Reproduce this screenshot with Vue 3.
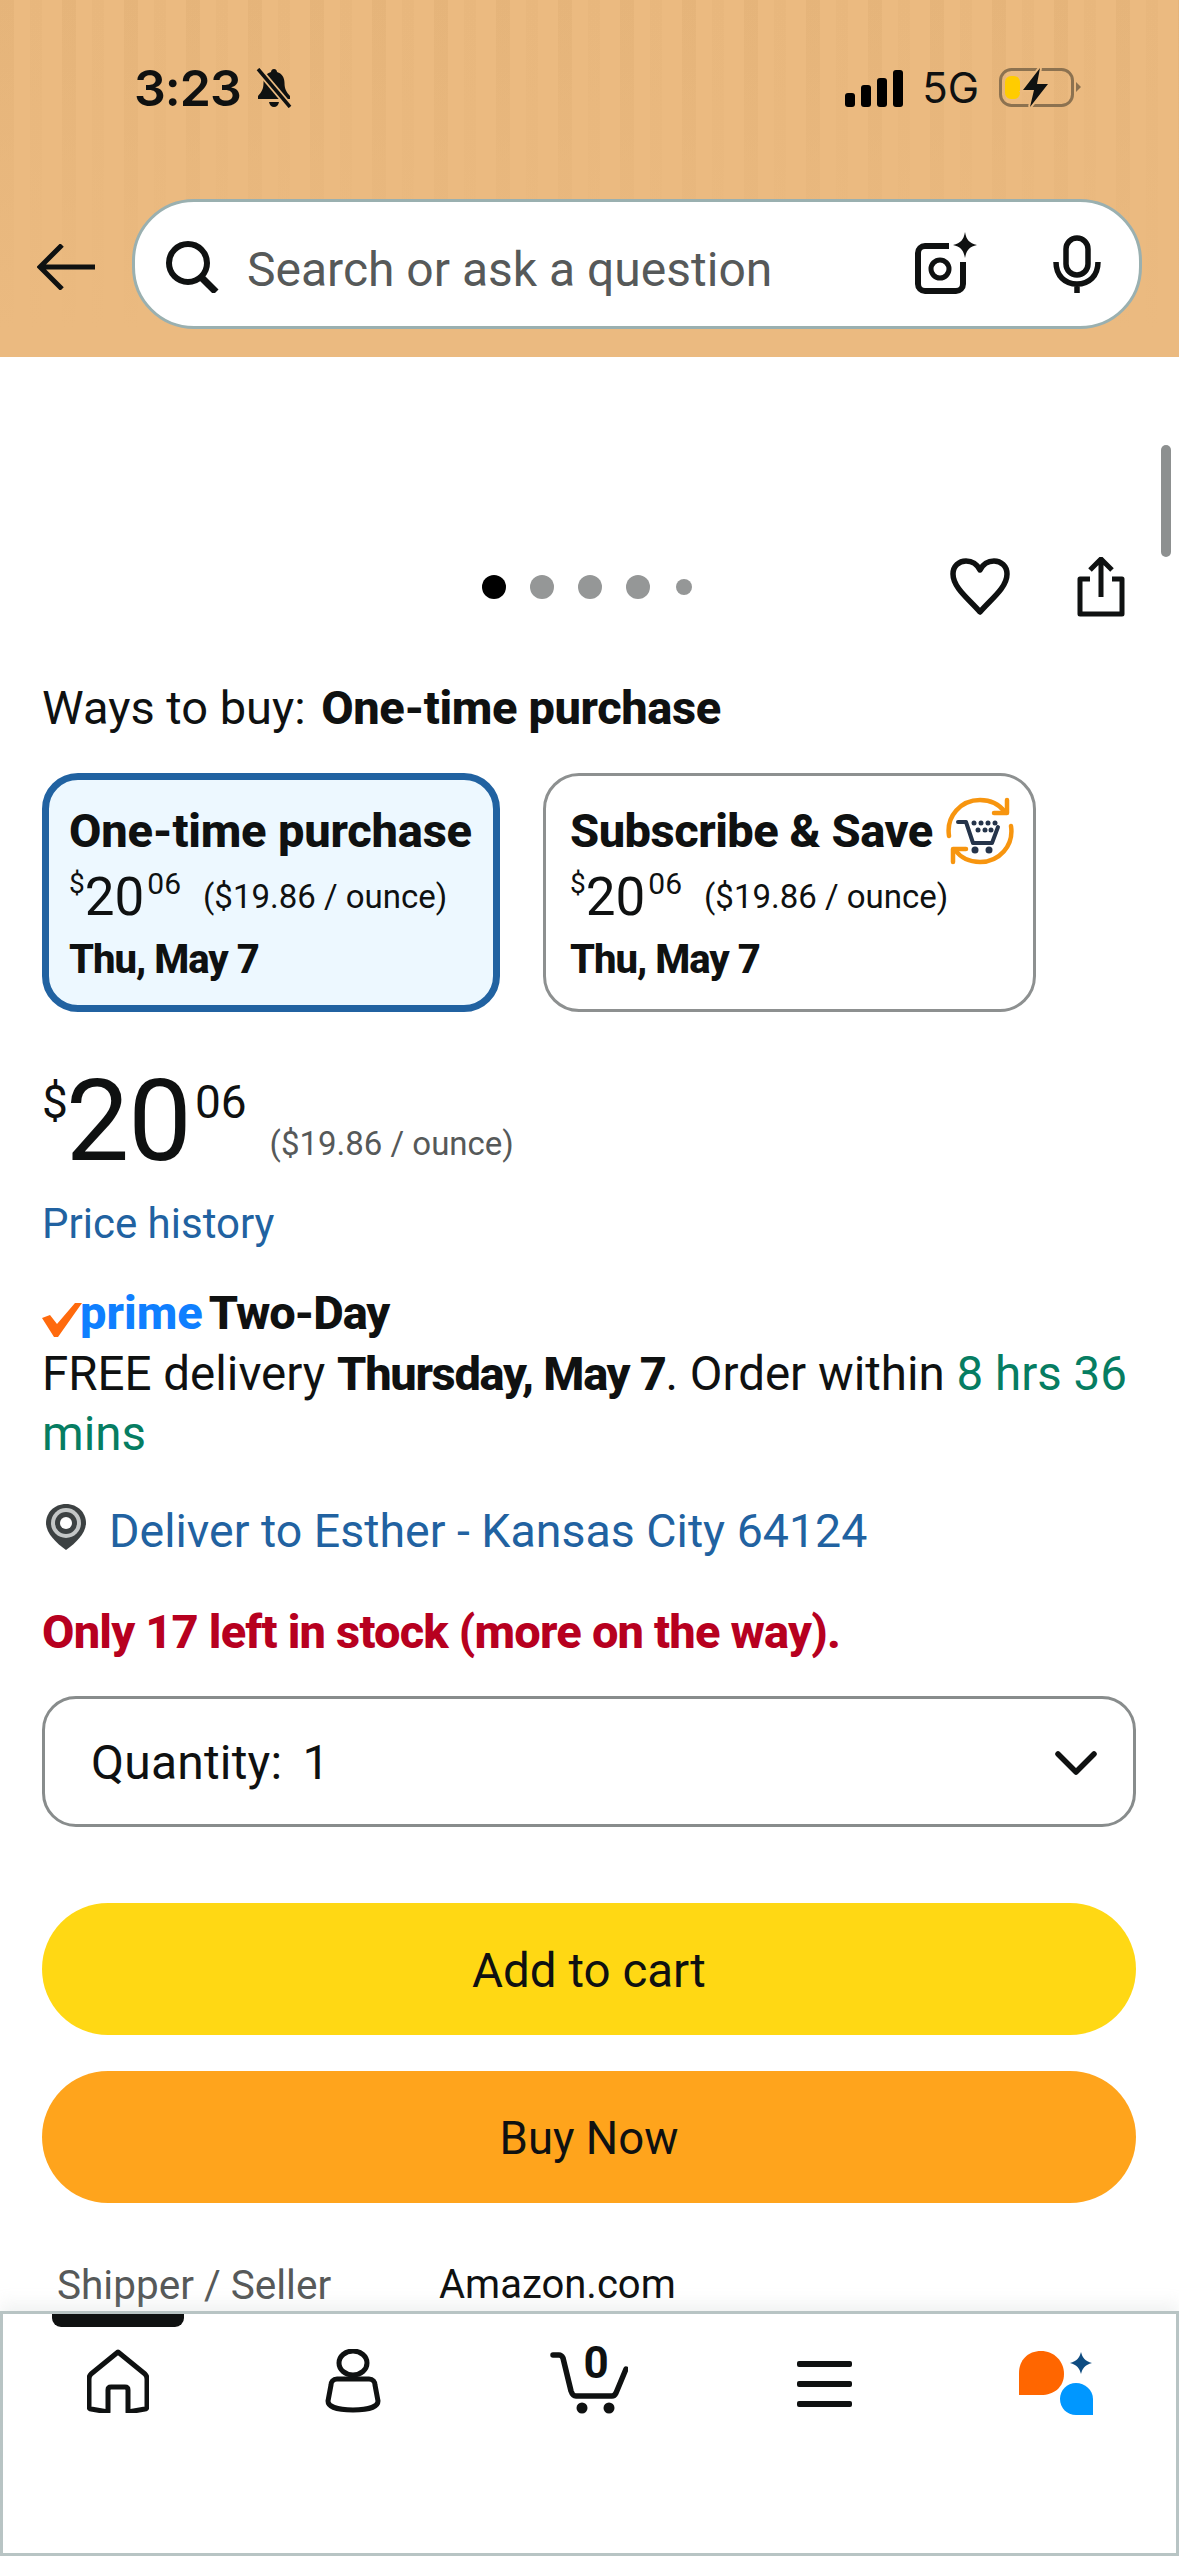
<script setup>
const cards = [
  { title: 'One-time purchase', selected: true },
  { title: 'Subscribe & Save', selected: false }
]
const dots = [false, false, false, false]
</script>

<template>
  <div class="page">
    <header class="top">
      <div class="status">
        <div class="status-left">
          <span class="time">3:23</span>
          <svg class="bell" viewBox="0 0 38 40">
            <path d="M19 1c2 0 3 1.500 3 3 5 1.500 7.500 5.500 7.500 11 0 6 2 9 5.500 13v3H3v-3c3.500-4 5.500-7 5.500-13 0-5.500 2.500-9.500 7.500-11 0-1.500 1-3 3-3z" fill="#0f1111"/>
            <path d="M14 34h10c-.5 3-2.500 5-5 5s-4.500-2-5-5z" fill="#0f1111"/>
            <path d="M3 1l32 38" stroke="#ebba80" stroke-width="7"/>
            <path d="M3 1l32 38" stroke="#0f1111" stroke-width="3.500"/>
          </svg>
        </div>
        <div class="status-right">
          <svg class="signal" viewBox="0 0 60 37">
            <rect x="0" y="23" width="10" height="14" rx="3"/>
            <rect x="16" y="15" width="10" height="22" rx="3"/>
            <rect x="32" y="8" width="10" height="29" rx="3"/>
            <rect x="48" y="0" width="10" height="37" rx="3"/>
          </svg>
          <span class="net">5G</span>
          <svg class="battery" viewBox="0 0 82 40">
            <rect x="1.500" y="1.500" width="72" height="36" rx="11" fill="none" stroke="#8c7250" stroke-width="3"/>
            <rect x="6" y="8" width="15" height="23" rx="6" fill="#ffcc00"/>
            <path d="M77 14l5 5-5 5z" fill="#8c7250"/>
            <path d="M41 0L24 22h11l-4 17 18-23H38z" fill="#ebba80" stroke="#ebba80" stroke-width="4"/>
            <path d="M41 0L24 22h11l-4 17 18-23H38z" fill="#0f1111"/>
          </svg>
        </div>
      </div>
      <div class="searchbar">
        <svg class="back" viewBox="0 0 58 46" fill="none" stroke="#0f1111" stroke-width="5">
          <path d="M58 23H4M25 1L3 23l22 22"/>
        </svg>
        <div class="search">
          <svg class="lens" viewBox="0 0 54 52" fill="none" stroke="#0f1111" stroke-width="6">
            <circle cx="23" cy="22" r="19"/>
            <path d="M36 36l15 15" stroke-width="7"/>
          </svg>
          <span class="placeholder">Search or ask a question</span>
          <svg class="camera" viewBox="0 0 62 62">
            <path d="M34 14H10a7 7 0 0 0-7 7v31a7 7 0 0 0 7 7h31a7 7 0 0 0 7-7V30" fill="none" stroke="#0f1111" stroke-width="6"/>
            <circle cx="25" cy="37" r="9" fill="none" stroke="#0f1111" stroke-width="5"/>
            <path d="M50 0c1.500 8 4 11 12 13-8 2-10.500 5-12 13-1.500-8-4-11-12-13 8-2 10.500-5 12-13z" fill="#0f1111"/>
          </svg>
          <svg class="mic" viewBox="0 0 48 58" fill="none" stroke="#0f1111" stroke-width="5.500">
            <rect x="13" y="3" width="22" height="37" rx="11"/>
            <path d="M3 27c0 14 9 22 21 22s21-8 21-22M24 49v9"/>
          </svg>
        </div>
      </div>
    </header>

    <main class="content">
      <div class="scroll-thumb"></div>

      <div class="gallery-row">
        <span></span>
        <div class="dots">
          <i class="dot active"></i>
          <i v-for="(d, i) in dots.slice(1)" :key="i" class="dot"></i>
          <i class="dot small"></i>
        </div>
        <div class="actions">
          <svg class="heart" viewBox="0 0 60 58" fill="none" stroke="#0f1111" stroke-width="5.500">
            <path d="M30 54C20 42 3 30 3 16 3 8 9 3 16 3c6 0 11 3 14 9 3-6 8-9 14-9 7 0 13 5 13 13 0 14-17 26-27 38z" stroke-linejoin="round"/>
          </svg>
          <svg class="share" viewBox="0 0 48 60" fill="none" stroke="#0f1111" stroke-width="5">
            <path d="M13 22H3v35h42V22H35" stroke-linejoin="round"/>
            <path d="M24 40V3M13 13L24 2l11 11"/>
          </svg>
        </div>
      </div>

      <div class="body">
        <p class="ways">Ways to buy: <b>One-time purchase</b></p>

        <div class="cards">
          <div v-for="c in cards" :key="c.title" class="card" :class="{ selected: c.selected }">
            <div class="card-title">
              {{ c.title }}
              <svg v-if="!c.selected" class="sns" viewBox="0 0 70 70">
                <g fill="none" stroke="#f7950f" stroke-width="4.500" stroke-linecap="round" stroke-linejoin="round">
                  <path d="M4 40C1 20 16 4 35 4c11 0 19 4 25 12"/>
                  <path d="M62 4v13H49"/>
                  <path d="M66 30c3 20-12 36-31 36-11 0-19-4-25-12"/>
                  <path d="M8 66V53h13"/>
                </g>
                <path d="M13 26h8l7 21h19l6-16" fill="none" stroke="#25344a" stroke-width="4" stroke-linecap="round" stroke-linejoin="round"/>
                <g fill="#25344a">
                  <circle cx="30" cy="54" r="3.500"/><circle cx="44" cy="54" r="3.500"/>
                  <circle cx="29" cy="27" r="2.500"/><circle cx="36" cy="27" r="2.500"/><circle cx="43" cy="27" r="2.500"/><circle cx="50" cy="27" r="2.500"/>
                  <circle cx="33" cy="34" r="2.500"/><circle cx="40" cy="34" r="2.500"/><circle cx="46" cy="34" r="2.500"/>
                </g>
              </svg>
            </div>
            <div class="card-price">
              <span class="cur">$</span><span class="whole">20</span><span class="frac">06</span>
              <span class="unit">($19.86 / ounce)</span>
            </div>
            <div class="card-date">Thu, May 7</div>
          </div>
        </div>

        <div class="price">
          <span class="cur">$</span><span class="whole">20</span><span class="frac">06</span>
          <span class="unit">($19.86 / ounce)</span>
        </div>

        <a class="link history">Price history</a>

        <div class="prime-line">
          <svg class="check" viewBox="0 0 40 34">
            <path d="M0 15l8-3 7 9L33 0h7L16 34h-4z" fill="#ff6a0d"/>
          </svg>
          <span class="prime">prime</span>
          <b>Two-Day</b>
        </div>
        <p class="delivery">FREE delivery <b>Thursday, May 7</b>. Order within <span class="green">8 hrs 36</span> <span class="green">mins</span></p>

        <div class="deliver-to">
          <svg class="pin" viewBox="0 0 42 48">
            <path d="M21 1C9 1 1 10 1 20c0 10 10 20 20 27 10-7 20-17 20-27C41 10 33 1 21 1z" fill="#3c4142"/>
            <circle cx="21" cy="20" r="15" fill="#c4c7c7"/>
            <circle cx="21" cy="20" r="11" fill="#3c4142"/>
            <circle cx="21" cy="20" r="6" fill="#fff"/>
          </svg>
          <a class="link">Deliver to Esther - Kansas City 64124</a>
        </div>

        <p class="stock">Only 17 left in stock (more on the way).</p>

        <div class="qty">
          <span>Quantity: <span class="qty-val">1</span></span>
          <svg class="chev" viewBox="0 0 42 26" fill="none" stroke="#0f1111" stroke-width="5.500" stroke-linecap="round" stroke-linejoin="round">
            <path d="M3 4l18 18L39 4"/>
          </svg>
        </div>

        <button class="btn cart">Add to cart</button>
        <button class="btn buy">Buy Now</button>

        <div class="seller">
          <span class="seller-key">Shipper / Seller</span>
          <span>Amazon.com</span>
        </div>
      </div>
    </main>

    <nav class="tabs">
      <div class="tab-mark"></div>
      <div class="tab">
        <svg class="ic-home" viewBox="0 0 62 64" fill="none" stroke="#0f1111" stroke-width="5" stroke-linejoin="round">
          <path d="M31 3L4 25c-1 1-2 3-2 5v28c0 1 1 2 2 2l17 3V41c0-2 1-3 3-3h14c2 0 3 1 3 3v22l17-3c1 0 2-1 2-2V30c0-2-1-4-2-5z"/>
        </svg>
      </div>
      <div class="tab">
        <svg class="ic-user" viewBox="0 0 56 64" fill="none" stroke="#0f1111" stroke-width="5">
          <ellipse cx="28" cy="14" rx="14" ry="12"/>
          <path d="M12 30h32c4 0 6 3 6 6l3 16c0 5-8 9-25 9S3 57 3 52l3-16c0-3 2-6 6-6z" stroke-linejoin="round"/>
        </svg>
      </div>
      <div class="tab">
        <div class="ic-cart">
          <svg viewBox="0 0 78 68" fill="none" stroke="#0f1111" stroke-width="5.500" stroke-linecap="round" stroke-linejoin="round">
            <path d="M3 8h6c2 0 3 1 4 3l8 33c1 3 2 5 5 5h36c2 0 3-1 4-3l10-24"/>
            <circle cx="32" cy="61" r="5.500" fill="#0f1111" stroke="none"/>
            <circle cx="59" cy="61" r="5.500" fill="#0f1111" stroke="none"/>
          </svg>
          <span class="cart-count">0</span>
        </div>
      </div>
      <div class="tab">
        <div class="ic-menu"><i></i><i></i><i></i></div>
      </div>
      <div class="tab">
        <svg class="ic-ai" viewBox="0 0 76 66">
          <path d="M23 1c13 0 23 10 23 23s-10 21-23 21H1V23C1 10 10 1 23 1z" fill="#ff6600"/>
          <path d="M58 33c9 0 17 7 17 16v16H58c-9 0-16-7-16-16s7-16 16-16z" fill="#0097ff"/>
          <path d="M63 2c1.500 6 4 9 11 11-7 2-9.500 5-11 11-1.500-6-4-9-11-11 7-2 9.500-5 11-11z" fill="#0f4c81"/>
        </svg>
      </div>
    </nav>
  </div>
</template>

<style>
html, body {
  margin: 0;
  background: #fff;
}
</style>

<style scoped>
.page {
  position: relative;
  width: 1179px;
  height: 2556px;
  overflow: hidden;
  display: flex;
  flex-direction: column;
  font-family: Roboto, "Noto Sans", sans-serif;
  color: #0f1111;
  background: #fff;
}

.top {
  height: 357px;
  flex: none;
  box-sizing: border-box;
  padding-top: 68px;
  background-color: #ebba80;
  background-image:
    linear-gradient(to bottom, rgba(235, 186, 128, 0) 0, #ebba80 92%),
    repeating-linear-gradient(90deg, rgba(180, 130, 70, 0.1) 0 14px, transparent 14px 30px, rgba(180, 130, 70, 0.05) 30px 42px, transparent 42px 62px);
}

.status {
  height: 40px;
  display: flex;
  justify-content: space-between;
  padding: 0 98px 0 134px;
}
.status-left {
  display: flex;
  align-items: center;
  gap: 14px;
}
.time {
  font-family: Inter, sans-serif;
  font-size: 50px;
  font-weight: 600;
  line-height: 40px;
  letter-spacing: -1px;
}
.bell {
  width: 38px;
  height: 40px;
}
.status-right {
  display: flex;
  align-items: center;
}
.signal {
  width: 60px;
  height: 37px;
  fill: #000;
}
.net {
  font-family: Inter, sans-serif;
  font-size: 42px;
  line-height: 40px;
  margin-left: 17px;
  margin-right: 20px;
}
.battery {
  width: 82px;
  height: 40px;
}

.searchbar {
  margin-top: 91px;
  display: flex;
  align-items: center;
  padding: 0 37px;
}
.back {
  width: 58px;
  height: 46px;
  flex: none;
  margin-top: 6px;
}
.search {
  margin-left: 37px;
  width: 1010px;
  height: 130px;
  box-sizing: border-box;
  border: 3px solid #9ab0b0;
  border-radius: 62px;
  background: #fff;
  display: flex;
  align-items: center;
  padding-left: 30px;
}
.lens {
  width: 54px;
  height: 52px;
  flex: none;
  margin-top: 6px;
}
.placeholder {
  margin-left: 28px;
  padding-top: 10px;
  font-size: 48px;
  color: #565959;
  flex: 1;
}
.camera {
  width: 62px;
  height: 62px;
  flex: none;
  margin-top: -3px;
}
.mic {
  width: 48px;
  height: 58px;
  flex: none;
  margin-left: 76px;
  margin-right: 38px;
}

.content {
  position: relative;
  flex: 1;
  min-height: 0;
}
.scroll-thumb {
  position: absolute;
  top: 88px;
  right: 8px;
  width: 10px;
  height: 112px;
  border-radius: 5px;
  background: #8d9090;
}

.gallery-row {
  margin-top: 200px;
  display: grid;
  grid-template-columns: 1fr auto 1fr;
  align-items: center;
  height: 60px;
}
.dots {
  display: flex;
  align-items: center;
  gap: 24px;
  margin-right: 6px;
}
.dot {
  width: 24px;
  height: 24px;
  border-radius: 50%;
  background: #959797;
}
.dot.active {
  background: #000;
}
.dot.small {
  width: 16px;
  height: 16px;
  margin-left: 2px;
}
.actions {
  display: flex;
  justify-content: flex-end;
  align-items: center;
  gap: 67px;
  padding-right: 54px;
}
.heart {
  width: 60px;
  height: 58px;
}
.share {
  width: 48px;
  height: 60px;
}

.body {
  padding: 0 43px 0 42px;
}
.body p {
  margin: 0;
}
b {
  font-weight: 800;
  letter-spacing: -0.4px;
}
.ways {
  margin-top: 61px !important;
  font-size: 47px;
  line-height: 60px;
}
.ways b {
  margin-left: 4px;
}

.cards {
  margin-top: 35px;
  display: flex;
  gap: 43px;
}
.card {
  box-sizing: border-box;
  width: 493px;
  height: 239px;
  border: 3px solid #8d9090;
  border-radius: 36px;
  padding: 25px 0 0 24px;
}
.card.selected {
  width: 458px;
  border: 7px solid #2162a1;
  background: #edf8ff;
  padding: 21px 0 0 20px;
}
.card-title {
  display: flex;
  align-items: center;
  gap: 12px;
  height: 60px;
  font-size: 47px;
  line-height: 60px;
  font-weight: 800;
  letter-spacing: -0.2px;
  white-space: nowrap;
}
.card:not(.selected) .card-title {
  letter-spacing: -0.5px;
}
.sns {
  width: 70px;
  height: 70px;
  flex: none;
}
.card-price {
  display: flex;
  align-items: flex-start;
  height: 62px;
  margin-top: 5px;
}
.card-price .cur {
  font-size: 28px;
  line-height: 36px;
}
.card-price .whole {
  font-size: 53px;
  line-height: 62px;
}
.card-price .frac {
  font-size: 30px;
  line-height: 36px;
  margin-left: 3px;
}
.card-price .unit {
  font-size: 33px;
  line-height: 62px;
  margin-left: 22px;
}
.card-date {
  margin-top: 4px;
  font-size: 40px;
  font-weight: 800;
  letter-spacing: -1px;
  line-height: 56px;
}

.price {
  margin-top: 60px;
  display: flex;
  align-items: flex-start;
  height: 100px;
}
.price .cur {
  font-size: 46px;
  line-height: 60px;
}
.price .whole {
  font-size: 113px;
  line-height: 100px;
  letter-spacing: -1px;
  margin-left: -2px;
}
.price .frac {
  font-size: 46px;
  line-height: 60px;
  margin-left: 4px;
}
.price .unit {
  font-size: 33px;
  line-height: 40px;
  margin: 52px 0 0 23px;
  color: #565959;
}

.link {
  color: #2162a1;
}
.history {
  display: block;
  margin-top: 24px;
  font-size: 42px;
  line-height: 56px;
}

.prime-line {
  margin-top: 32px;
  display: flex;
  align-items: center;
  height: 60px;
  font-size: 47px;
}
.prime-line b {
  letter-spacing: -1.1px;
  margin-top: -4px;
}
.check {
  width: 40px;
  height: 34px;
  margin-top: 12px;
}
.prime {
  color: #0f7fff;
  font-weight: 800;
  margin: -4px 6px 0 -2px;
}
.delivery {
  font-size: 47.500px;
  line-height: 60px;
}
.delivery b {
  font-size: 47px;
  letter-spacing: -1.3px;
}
.green {
  color: #067d62;
}

.deliver-to {
  margin-top: 37px;
  display: flex;
  align-items: center;
  height: 60px;
  font-size: 46.500px;
}
.pin {
  width: 42px;
  height: 48px;
  margin: -8px 22px 0 3px;
}

.stock {
  margin-top: 41px !important;
  font-size: 47px;
  font-weight: 800;
  letter-spacing: -0.8px;
  line-height: 60px;
  color: #b7001f;
}

.qty {
  margin-top: 34px;
  height: 131px;
  box-sizing: border-box;
  border: 3px solid #888c8c;
  border-radius: 34px;
  display: flex;
  align-items: center;
  justify-content: space-between;
  padding: 2px 36px 0 46px;
  font-size: 48px;
  letter-spacing: 0.2px;
}
.qty-val {
  margin-left: 8px;
}
.chev {
  width: 42px;
  height: 26px;
}

.btn {
  display: block;
  width: 100%;
  height: 132px;
  border: none;
  border-radius: 66px;
  padding: 3px 0 0;
  font-family: inherit;
  font-size: 47.500px;
  color: #0f1111;
}
.cart {
  margin-top: 76px;
  background: #ffd814;
}
.buy {
  margin-top: 36px;
  background: #ffa41c;
  font-size: 45.500px;
}

.seller {
  margin-top: 54px;
  display: flex;
  font-size: 40px;
  line-height: 56px;
  padding-left: 15px;
}
.seller-key {
  width: 382px;
  color: #565959;
  font-size: 40.500px;
}

.tabs {
  position: absolute;
  left: 0;
  right: 0;
  bottom: 0;
  height: 245px;
  box-sizing: border-box;
  border: 3px solid #b8c4c4;
  background: #fff;
  box-shadow: 0 -8px 14px rgba(180, 190, 190, 0.18);
  display: grid;
  grid-template-columns: repeat(5, 1fr);
  align-items: start;
  padding-top: 33px;
}
.tab-mark {
  position: absolute;
  top: 0;
  left: 49px;
  width: 132px;
  height: 13px;
  background: #0f1111;
  border-radius: 0 0 9px 9px;
}
.tab {
  display: flex;
  justify-content: center;
  align-items: flex-start;
  height: 72px;
}
.ic-home {
  width: 62px;
  height: 64px;
  margin: 2px 4px 0 0;
}
.ic-user {
  width: 56px;
  height: 64px;
  margin: 2px 3px 0 0;
}
.ic-cart {
  position: relative;
  width: 78px;
  height: 68px;
}
.ic-cart svg {
  width: 78px;
  height: 68px;
}
.cart-count {
  position: absolute;
  top: -8px;
  left: 33px;
  font-size: 44px;
  font-weight: 700;
  line-height: 48px;
}
.ic-menu {
  width: 55px;
  display: flex;
  flex-direction: column;
  gap: 14px;
  margin-top: 14px;
}
.ic-menu i {
  height: 6px;
  border-radius: 2px;
  background: #0f1111;
}
.ic-ai {
  width: 76px;
  height: 66px;
  margin: 3px 6px 0 0;
}
</style>
